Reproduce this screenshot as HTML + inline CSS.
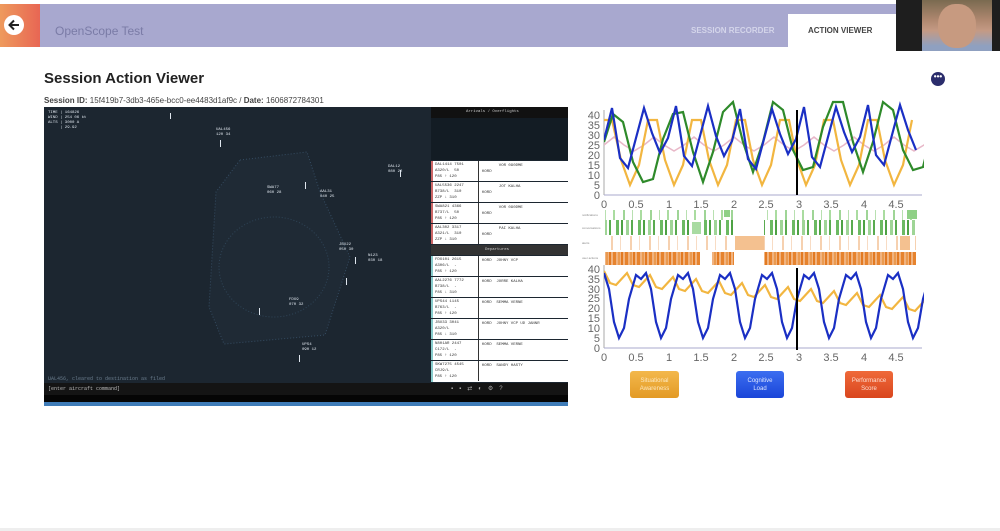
<!DOCTYPE html>
<html><head><meta charset="utf-8"><style>
*{margin:0;padding:0;box-sizing:border-box}
body{width:1000px;height:531px;background:#fff;font-family:"Liberation Sans",sans-serif;position:relative;overflow:hidden}
.abs{position:absolute}
.strip{position:absolute;left:431px;width:137px;height:20px;background:#fff;border-left:2px solid #c66;}
.strip .l{position:absolute;left:2px;top:1px;width:42px;height:18px;font:4px "Liberation Mono",monospace;color:#333;line-height:6px}
.strip .r{position:absolute;left:45px;top:0;width:90px;height:20px;border-left:1px solid #333;font:4px "Liberation Mono",monospace;color:#333;padding:2px 3px;line-height:6px}
.t{position:absolute;color:#dfe6ee;font:4px "Liberation Mono",monospace;line-height:5px}
</style></head><body>
<div class="abs" style="left:0;top:4px;width:40px;height:43px;background:linear-gradient(90deg,#ee9a5c,#e86654)"></div>
<div class="abs" style="left:4px;top:15px;width:20px;height:20px;border-radius:50%;background:#fff"></div>
<svg class="abs" style="left:4px;top:15px" width="20" height="20"><path d="M15 10H6M10 5.5L5.5 10L10 14.5" stroke="#222" stroke-width="2" fill="none"/></svg>
<div class="abs" style="left:40px;top:4px;width:856px;height:43px;background:#a8a8cf"></div>
<div class="abs" style="left:55px;top:24px;font-size:12px;color:#7a7ba6">OpenScope Test</div>
<div class="abs" style="left:691px;top:26px;font-size:8px;font-weight:bold;color:#d4d5ea">SESSION RECORDER</div>
<div class="abs" style="left:788px;top:14px;width:108px;height:33px;background:#fff"></div>
<div class="abs" style="left:808px;top:26px;font-size:8px;font-weight:bold;color:#444">ACTION VIEWER</div>
<div class="abs" style="left:896px;top:0;width:104px;height:51px;background:#1e1e1e"></div>
<div class="abs" style="left:922px;top:0;width:70px;height:51px;background:linear-gradient(180deg,#7a6a50,#b08870 40%,#c49a84 60%,#8fa0c0 90%)"></div>
<div class="abs" style="left:938px;top:4px;width:38px;height:44px;border-radius:45%;background:#c79a80"></div>
<div class="abs" style="left:44px;top:70px;font-size:15px;font-weight:bold;color:#222">Session Action Viewer</div>
<div class="abs" style="left:44px;top:96px;font-size:8px;color:#444"><b>Session ID:</b> 15f419b7-3db3-465e-bcc0-ee4483d1af9c / <b>Date:</b> 1606872784301</div>
<div class="abs" style="left:931px;top:72px;width:14px;height:14px;border-radius:50%;background:#2b2d6c;color:#fff;font-size:8px;line-height:10px;text-align:center;font-weight:bold">•••</div>
<div class="abs" style="left:44px;top:107px;width:524px;height:299px;background:#1c2630"></div>
<svg class="abs" style="left:44px;top:107px" width="387" height="276">
<polygon points="196,53 263,45 276,85 306,150 281,228 180,237 165,200 172,85" fill="#1f2a35" stroke="#354c62" stroke-width="1" stroke-dasharray="1 2"/>
<ellipse cx="230" cy="160" rx="55" ry="50" fill="none" stroke="#2f4558" stroke-dasharray="1 2"/>
<g fill="#dfe6ee"><rect x="176" y="33" width="1" height="7"/><rect x="261" y="75" width="1" height="7"/><rect x="311" y="150" width="1" height="7"/><rect x="215" y="201" width="1" height="7"/><rect x="255" y="248" width="1" height="7"/><rect x="302" y="171" width="1" height="7"/><rect x="356" y="63" width="1" height="7"/><rect x="126" y="6" width="1" height="6"/></g>
</svg>
<div class="t" style="left:48px;top:111px">TIME | 164826<br>WIND | 254 06 kt<br>ALTS | 3000 A<br>&nbsp;&nbsp;&nbsp;&nbsp; | 29.92</div>
<div class="t" style="left:216px;top:128px">UAL456<br>120 34</div>
<div class="t" style="left:388px;top:165px">DAL12<br>080 22</div>
<div class="t" style="left:267px;top:186px">SWA77<br>060 28</div>
<div class="t" style="left:320px;top:190px">AAL31<br>040 25</div>
<div class="t" style="left:339px;top:243px">JBU22<br>050 30</div>
<div class="t" style="left:368px;top:254px">N123<br>030 18</div>
<div class="t" style="left:289px;top:298px">FDX9<br>070 32</div>
<div class="t" style="left:302px;top:343px">UPS4<br>090 12</div>
<div class="abs" style="left:48px;top:376px;font:5px 'Liberation Mono',monospace;color:#6a7c8c">UAL456, cleared to destination as filed</div>
<div class="abs" style="left:431px;top:107px;width:137px;height:11px;background:#111"></div>
<div class="t" style="left:466px;top:110px;color:#ccc">Arrivals / Overflights</div>
<div class="abs" style="left:431px;top:118px;width:137px;height:42px;background:#131c24"></div>
<div class="abs" style="left:431px;top:245px;width:137px;height:10px;background:#333"></div>
<div class="t" style="left:485px;top:248px;color:#ccc">Departures</div>
<div class="strip" style="top:161px"><div class="l">DAL1414 7501<br>A320/L&nbsp; 50<br>P85 ↑ 120</div><div class="r">&nbsp;&nbsp;&nbsp;&nbsp;&nbsp;&nbsp;&nbsp;VOR 090DME<br>KORD</div></div>
<div class="strip" style="top:182px"><div class="l">UAL5536 2247<br>B738/L&nbsp; 310<br>ZZP ↓ 310</div><div class="r">&nbsp;&nbsp;&nbsp;&nbsp;&nbsp;&nbsp;&nbsp;JOT KALHA<br>KORD</div></div>
<div class="strip" style="top:203px"><div class="l">SWA821 4366<br>B737/L&nbsp; 50<br>P85 ↑ 120</div><div class="r">&nbsp;&nbsp;&nbsp;&nbsp;&nbsp;&nbsp;&nbsp;VOR 090DME<br>KORD</div></div>
<div class="strip" style="top:224px"><div class="l">AAL302 3317<br>A321/L&nbsp; 310<br>ZZP ↓ 310</div><div class="r">&nbsp;&nbsp;&nbsp;&nbsp;&nbsp;&nbsp;&nbsp;PAI KALHA<br>KORD</div></div>
<div class="strip" style="top:256px;border-left-color:#8cc"><div class="l">FDX101 2615<br>A306/L&nbsp; -<br>P85 ↑ 120</div><div class="r">KORD&nbsp;&nbsp;JOHNY VCP</div></div>
<div class="strip" style="top:277px;border-left-color:#8cc"><div class="l">AAL2276 7772<br>B738/L&nbsp; -<br>P85 ↓ 310</div><div class="r">KORD&nbsp;&nbsp;JORRE KALHA</div></div>
<div class="strip" style="top:298px;border-left-color:#8cc"><div class="l">UPS44 1145<br>B763/L&nbsp; -<br>P85 ↑ 120</div><div class="r">KORD&nbsp;&nbsp;SEMMA VERNE</div></div>
<div class="strip" style="top:319px;border-left-color:#8cc"><div class="l">JBU33 3041<br>A320/L<br>P85 ↓ 310</div><div class="r">KORD&nbsp;&nbsp;JOHNY VCP UD JANNR</div></div>
<div class="strip" style="top:340px;border-left-color:#8cc"><div class="l">N801AR 2447<br>C172/L&nbsp; -<br>P85 ↑ 120</div><div class="r">KORD&nbsp;&nbsp;SEMMA VERNE</div></div>
<div class="strip" style="top:361px;border-left-color:#8cc;height:21px"><div class="l">SKW7275 4545<br>CRJ9/L<br>P85 ↑ 120</div><div class="r">KORD&nbsp;&nbsp;SANDY HASTY</div></div>
<div class="abs" style="left:44px;top:383px;width:524px;height:12px;background:#141414"></div>
<div class="abs" style="left:48px;top:386px;font:5px 'Liberation Mono',monospace;color:#bbb">[enter aircraft command]</div>
<div class="abs" style="left:451px;top:385px;font:6px 'Liberation Sans';color:#aaa;letter-spacing:6px">▪▪⇄◐⚙?</div>
<div class="abs" style="left:44px;top:395px;width:524px;height:7px;background:#050505"></div>
<div class="abs" style="left:44px;top:402px;width:524px;height:4px;background:#3f7cb8"></div>
<svg class="abs" style="left:580px;top:100px" width="360" height="270" viewBox="580 100 360 270" font-family="Liberation Sans" font-size="11" fill="#666">
<defs>
<clipPath id="c1"><rect x="604" y="100" width="320" height="96"/></clipPath>
<clipPath id="c2"><rect x="604" y="262" width="320" height="87"/></clipPath>
<pattern id="p1" width="27" height="10" patternUnits="userSpaceOnUse"><rect x="2" width="2" height="10" fill="#9fd596"/><rect x="11" width="1" height="10" fill="#b8e0b0"/><rect x="19" width="2" height="10" fill="#aadca0"/></pattern>
<pattern id="p2" width="22" height="15" patternUnits="userSpaceOnUse"><rect x="0" width="3" height="15" fill="#6cba62"/><rect x="5" width="2" height="15" fill="#4ea244"/><rect x="10" width="3" height="15" fill="#9fd596"/><rect x="15" width="2" height="15" fill="#5aab50"/></pattern>
<pattern id="p3" width="19" height="14" patternUnits="userSpaceOnUse"><rect x="3" width="2" height="14" fill="#f6d1b0"/><rect x="12" width="1" height="14" fill="#f8dcc4"/></pattern>
<pattern id="p4" width="12" height="13" patternUnits="userSpaceOnUse"><rect width="12" height="13" fill="#f0b380"/><rect x="1" width="3" height="13" fill="#e6832e"/><rect x="6" width="2" height="13" fill="#ea9a50"/><rect x="9" width="2" height="13" fill="#e27a22"/></pattern>
</defs>
<g text-anchor="end"><text x="600" y="119">40</text><text x="600" y="129">35</text><text x="600" y="139">30</text><text x="600" y="149">25</text><text x="600" y="159">20</text><text x="600" y="169">15</text><text x="600" y="179">10</text><text x="600" y="189">5</text><text x="600" y="199">0</text></g>
<line x1="604" y1="110" x2="604" y2="195" stroke="#aaa"/><line x1="604" y1="195" x2="922" y2="195" stroke="#aac"/>
<g text-anchor="middle"><text x="604" y="208">0</text><text x="636" y="208">0.5</text><text x="669" y="208">1</text><text x="701" y="208">1.5</text><text x="734" y="208">2</text><text x="766" y="208">2.5</text><text x="799" y="208">3</text><text x="831" y="208">3.5</text><text x="864" y="208">4</text><text x="896" y="208">4.5</text></g>
<g clip-path="url(#c1)" fill="none" stroke-width="2.2">
<path d="M604,145 l10,-8 l10,8 l10,6 l10,-6 l10,-8 l10,8 l10,6 l10,-6 l10,-8 l10,8 l10,6 l10,-6 l10,-8 l10,8 l10,6 l10,-6 l10,-8 l10,8 l10,6 l10,-6 l10,-8 l10,8 l10,6 l10,-6 l10,-8 l10,8 l10,6 l10,-6 l10,-8 l10,8 l10,6 l10,-6 l10,-8 l10,8" stroke="#e8b8c8" stroke-width="1.6"/>
<path d="M604,120 l8,0 l9,40 l9,25 l9,-20 l9,-45 l9,0 l8,40 l9,25 l9,-20 l9,-45 l9,0 l8,40 l9,25 l9,-20 l9,-45 l9,0 l8,40 l9,25 l9,-20 l9,-45 l9,0 l8,40 l9,25 l9,-20 l9,-45 l9,0 l8,40 l9,25 l9,-20 l9,-45 l9,0 l8,40 l9,25 l9,-20 l9,-45" stroke="#f2b640"/>
<path d="M604,142 l9,-28 l10,8 l10,40 l10,20 l10,-3 l10,-40 l10,-25 l10,-2 l10,40 l10,30 l10,-30 l10,-40 l10,-10 l10,40 l10,30 l10,-30 l10,-40 l10,8 l10,40 l10,20 l10,-3 l10,-40 l10,-25 l10,0 l10,40 l10,30 l10,-30 l10,-40 l10,8 l10,40 l10,20 l10,-3 l10,-40 l10,-25" stroke="#2e8a2a"/>
<path d="M604,140 l8,-32 l8,50 l8,10 l8,-30 l8,-30 l8,25 l8,20 l8,-15 l8,-32 l8,50 l8,10 l8,-30 l8,-30 l8,30 l8,20 l8,-15 l8,-32 l8,50 l8,10 l8,-30 l8,-30 l8,25 l8,20 l8,-15 l8,-32 l8,50 l8,10 l8,-30 l8,-30 l8,25 l8,20 l8,-15 l8,-32 l8,50 l8,10 l8,-30 l8,-30 l8,25 l8,20" stroke="#1a2fc4"/>
</g>
<line x1="797" y1="110" x2="797" y2="195" stroke="#000" stroke-width="2"/>
<g font-size="3" fill="#888"><text x="582" y="216">notifications</text><text x="582" y="229">conversations</text><text x="582" y="244">alerts</text><text x="582" y="259">user actions</text></g>
<rect x="605" y="210" width="311" height="10" fill="url(#p1)"/>
<rect x="605" y="220" width="311" height="15" fill="url(#p2)"/>
<rect x="605" y="236" width="311" height="14" fill="url(#p3)"/>
<rect x="605" y="252" width="311" height="13" fill="url(#p4)"/>
<rect x="734" y="209" width="30" height="57" fill="#fff"/>
<rect x="735" y="236" width="29" height="14" fill="#f4c190"/>
<rect x="689" y="220" width="14" height="15" fill="#fff"/><rect x="692" y="222" width="9" height="12" fill="#a9dba2"/>
<rect x="907" y="210" width="10" height="9" fill="#8fd086"/><rect x="724" y="210" width="6" height="7" fill="#8fd086"/>
<rect x="700" y="252" width="12" height="13" fill="#fff"/><rect x="900" y="236" width="10" height="14" fill="#f4c190"/>
<g text-anchor="end"><text x="600" y="273">40</text><text x="600" y="283">35</text><text x="600" y="293">30</text><text x="600" y="302">25</text><text x="600" y="312">20</text><text x="600" y="322">15</text><text x="600" y="332">10</text><text x="600" y="342">5</text><text x="600" y="352">0</text></g>
<line x1="604" y1="265" x2="604" y2="348" stroke="#aaa"/><line x1="604" y1="348" x2="922" y2="348" stroke="#aac"/>
<g text-anchor="middle"><text x="604" y="361">0</text><text x="636" y="361">0.5</text><text x="669" y="361">1</text><text x="701" y="361">1.5</text><text x="734" y="361">2</text><text x="766" y="361">2.5</text><text x="799" y="361">3</text><text x="831" y="361">3.5</text><text x="864" y="361">4</text><text x="896" y="361">4.5</text></g>
<g clip-path="url(#c2)" fill="none" stroke-width="2.2">
<path d="M604,271 l6,12 l6,2 l11,-12 l6,12 l6,2 l11,-12 l6,12 l6,2 l11,-12 l6,12 l6,2 l11,-12 l6,12 l6,2 l11,-12 l6,12 l6,2 l11,-12 l6,12 l6,2 l11,-12 l6,12 l6,2 l11,-12 l6,12 l6,2 l11,-12 l6,12 l6,2 l11,-12 l6,12 l6,2 l11,-12 l6,12 l6,2 l11,-12 l6,12 l6,2 l11,-12 l6,12 l6,2 l11,-12 l6,12 l6,2 l11,-12" stroke="#f2b640"/>
<path d="M604,273 l5,16 l5,33 l5,16 l5,-10 l5,-29 l7,-24 l5,4 l5,-6 l5,16 l5,33 l5,16 l5,-10 l5,-29 l7,-24 l5,4 l5,-6 l5,16 l5,33 l5,16 l5,-10 l5,-29 l7,-24 l5,4 l5,-6 l5,16 l5,33 l5,16 l5,-10 l5,-29 l7,-24 l5,4 l5,-6 l5,16 l5,33 l5,16 l5,-10 l5,-29 l7,-24 l5,4 l5,-6 l5,16 l5,33 l5,16 l5,-10 l5,-29 l7,-24 l5,4 l5,-6 l5,16 l5,33 l5,16 l5,-10 l5,-29 l7,-24 l5,4 l5,-6 l5,16 l5,33 l5,16 l5,-10 l5,-29 l7,-24 l5,4 l5,-6" stroke="#1a2fc4"/>
</g>
<line x1="797" y1="268" x2="797" y2="350" stroke="#000" stroke-width="2"/>
</svg>
<div class="abs" style="left:630px;top:371px;width:49px;height:27px;border-radius:3px;background:linear-gradient(#f3b84c,#e39a25);color:#fde9c0;font-size:6px;text-align:center;line-height:8px;padding-top:6px">Situational<br>Awareness</div>
<div class="abs" style="left:736px;top:371px;width:48px;height:27px;border-radius:3px;background:linear-gradient(#3c6ef0,#1a45d8);color:#dfe7ff;font-size:6px;text-align:center;line-height:8px;padding-top:6px">Cognitive<br>Load</div>
<div class="abs" style="left:845px;top:371px;width:48px;height:27px;border-radius:3px;background:linear-gradient(#ef6a3a,#d9461e);color:#fde0d4;font-size:6px;text-align:center;line-height:8px;padding-top:6px">Performance<br>Score</div>
<div class="abs" style="left:0;top:528px;width:1000px;height:3px;background:#eee"></div>
</body></html>
